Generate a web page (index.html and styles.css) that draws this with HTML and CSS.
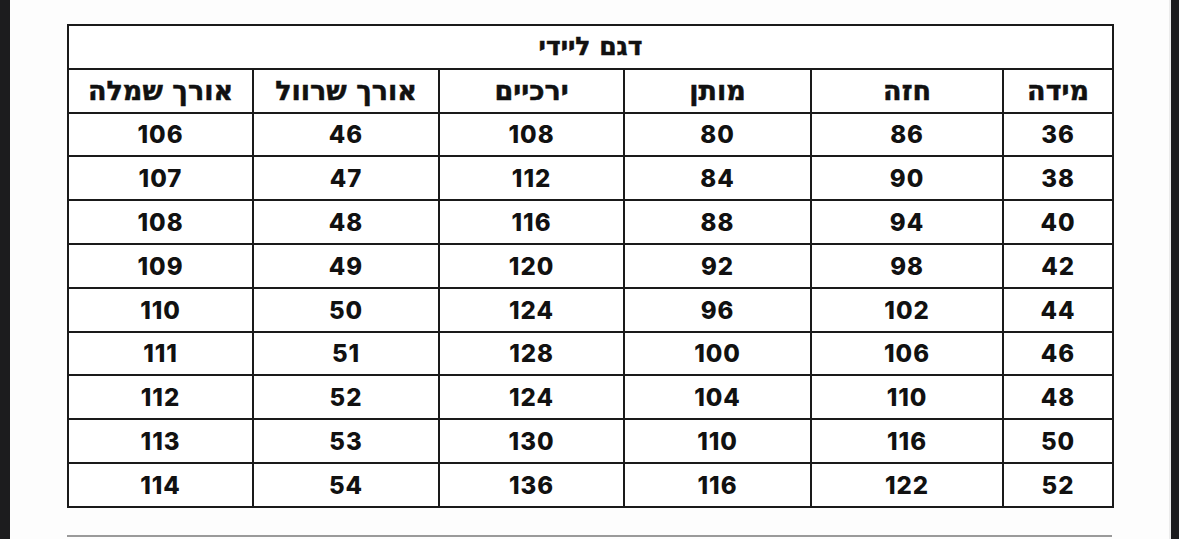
FILE: index.html
```html
<!DOCTYPE html>
<html lang="he">
<head>
<meta charset="utf-8">
<link rel="stylesheet" href="styles.css">
</head>
<body>
<div class="frame">
  <div class="strip strip-left"></div>
  <main class="page">
    <table class="sizes" dir="rtl">
      <colgroup>
        <col class="c1"><col class="c2"><col class="c3"><col class="c4"><col class="c5"><col class="c6">
      </colgroup>
      <thead>
        <tr class="title-row"><th colspan="6">דגם ליידי</th></tr>
        <tr class="head-row">
          <th>מידה</th><th>חזה</th><th>מותן</th><th>ירכיים</th><th>אורך שרוול</th><th>אורך שמלה</th>
        </tr>
      </thead>
      <tbody>
        <tr><td>36</td><td>86</td><td>80</td><td>108</td><td>46</td><td>106</td></tr>
        <tr><td>38</td><td>90</td><td>84</td><td>112</td><td>47</td><td>107</td></tr>
        <tr><td>40</td><td>94</td><td>88</td><td>116</td><td>48</td><td>108</td></tr>
        <tr><td>42</td><td>98</td><td>92</td><td>120</td><td>49</td><td>109</td></tr>
        <tr><td>44</td><td>102</td><td>96</td><td>124</td><td>50</td><td>110</td></tr>
        <tr><td>46</td><td>106</td><td>100</td><td>128</td><td>51</td><td>111</td></tr>
        <tr><td>48</td><td>110</td><td>104</td><td>124</td><td>52</td><td>112</td></tr>
        <tr><td>50</td><td>116</td><td>110</td><td>130</td><td>53</td><td>113</td></tr>
        <tr><td>52</td><td>122</td><td>116</td><td>136</td><td>54</td><td>114</td></tr>
      </tbody>
    </table>
    <div class="next-table"></div>
  </main>
  <div class="strip-edge"></div>
  <div class="strip strip-right"></div>
</div>
</body>
</html>
```

FILE: styles.css
```css
html, body {
  margin: 0;
  padding: 0;
  background: #ffffff;
}
.frame {
  display: flex;
  width: 1179px;
  height: 539px;
  overflow: hidden;
}
.strip {
  width: 10px;
  flex: none;
  background: #1c1c1e;
}
.strip-edge {
  width: 2px;
  flex: none;
  background: #ececec;
}
.page {
  flex: 1;
  background: #fdfdfd;
  padding: 24px 55px 0 57px;
  box-sizing: border-box;
}
.sizes {
  width: 1045px;
  border-collapse: collapse;
  table-layout: fixed;
  color: #111111;
}
.c1 { width: 110px; }
.c2 { width: 192px; }
.c3 { width: 187px; }
.c4 { width: 185px; }
.c5 { width: 186px; }
.c6 { width: 185px; }
.sizes th,
.sizes td {
  border: 2px solid #1a1a1a;
  height: 41.8px;
  padding: 0;
  line-height: 1;
  text-align: center;
  vertical-align: middle;
  background: #ffffff;
}
.sizes th {
  font-family: "DejaVu Sans", "Liberation Sans", sans-serif;
  font-weight: 700;
  font-size: 27px;
  -webkit-text-stroke: 0.5px #111111;
}
.title-row th {
  font-size: 25px;
}
.sizes td {
  font-family: Inter, "Open Sans", sans-serif;
  font-weight: 800;
  font-size: 24px;
  letter-spacing: 1px;
  height: 39.8px;
  padding-top: 2px;
}
.next-table {
  margin-top: 27px;
  width: 1045px;
  border-top: 2px solid #9a9a9a;
}
```
